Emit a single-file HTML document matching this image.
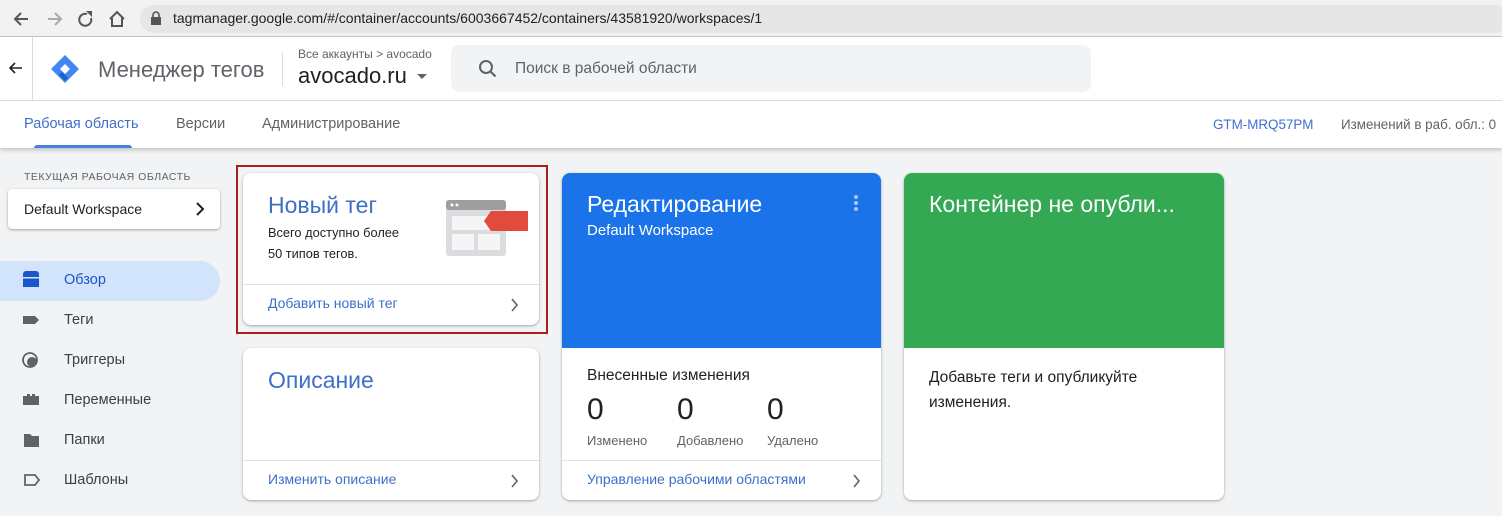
<!DOCTYPE html>
<html><head><meta charset="utf-8"><style>
*{box-sizing:border-box;margin:0;padding:0}
body{width:1502px;height:516px;overflow:hidden;background:#f1f3f4;font-family:"Liberation Sans",sans-serif;color:#202124;position:relative}
.a{position:absolute}
.card{position:absolute;background:#fff;border-radius:8px;box-shadow:0 1px 2px rgba(60,64,67,.3),0 1px 3px rgba(60,64,67,.15);overflow:hidden}
.nav{position:absolute;left:64px;font-size:14.5px;color:#3c4043}
</style></head><body>
<div class="a" style="left:0;top:0;width:1502px;height:37px;background:#f2f2f2;border-bottom:1px solid #c8c8c8"></div>
<svg class="a" style="left:12px;top:9px" width="120" height="20" viewBox="0 0 120 20">
<path d="M16 10H4M9 4L3 10l6 6" stroke="#555" stroke-width="2" fill="none"/>
<path d="M36 10h12M43 4l6 6-6 6" stroke="#aaa" stroke-width="2" fill="none"/>
<path d="M75 5a6 6 0 1 0 4 4" stroke="#555" stroke-width="2" fill="none"/><path d="M74 2h6v6z" fill="#555"/>
<path d="M98 10l7-7 7 7M100 9v8h10V9" stroke="#555" stroke-width="2" fill="none"/>
</svg>
<div class="a" style="left:140px;top:5px;width:1370px;height:28px;background:#e6e6e6;border-radius:14px"></div>
<svg class="a" style="left:150px;top:11px" width="12" height="14"><rect x="1" y="6" width="10" height="8" fill="#555"/><path d="M3 6V4a3 3 0 0 1 6 0v2" stroke="#555" stroke-width="1.6" fill="none"/></svg>
<div class="a" style="left:173px;top:10px;font-size:14px;color:#202124">tagmanager.google.com/#/container/accounts/6003667452/containers/43581920/workspaces/1</div>
<div class="a" style="left:0;top:37px;width:1502px;height:111px;background:#fff;box-shadow:0 2px 4px rgba(0,0,0,.2)"></div>
<div class="a" style="left:0;top:100px;width:1502px;height:1px;background:#dadce0"></div>
<div class="a" style="left:32px;top:37px;width:1px;height:63px;background:#dadce0"></div>
<svg class="a" style="left:9px;top:62px" width="14" height="12"><path d="M13 6H2M6 1L1 6l5 5" stroke="#202124" stroke-width="1.6" fill="none"/></svg>
<svg class="a" style="left:49px;top:53px" width="32" height="32" viewBox="0 0 32 32">
<path d="M16 2L30 16 16 30 2 16z" fill="#4285f4"/><path d="M16 11l5 5-5 5-5-5z" fill="#fff"/><path d="M10 22l6 6 3-3-6-6z" fill="#1a5fd0"/></svg>
<div class="a" style="left:98px;top:57px;font-size:22px;color:#5f6368">Менеджер тегов</div>
<div class="a" style="left:282px;top:52px;width:1px;height:34px;background:#dadce0"></div>
<div class="a" style="left:298px;top:47px;font-size:12px;color:#5f6368">Все аккаунты &gt; avocado</div>
<div class="a" style="left:298px;top:63px;font-size:22px;color:#202124">avocado.ru</div>
<svg class="a" style="left:417px;top:74px" width="12" height="6"><path d="M0 0h10L5 5z" fill="#5f6368"/></svg>
<div class="a" style="left:451px;top:45px;width:640px;height:47px;background:#f1f3f4;border-radius:8px"></div>
<svg class="a" style="left:478px;top:59px" width="20" height="20"><circle cx="8" cy="8" r="6" stroke="#5f6368" stroke-width="2" fill="none"/><path d="M12.5 12.5l5 5" stroke="#5f6368" stroke-width="2.2"/></svg>
<div class="a" style="left:515px;top:60px;font-size:15.5px;color:#5f6368">Поиск в рабочей области</div>
<div class="a" style="left:24px;top:116px;font-size:14.5px;color:#3f6fcf">Рабочая область</div>
<div class="a" style="left:34px;top:145px;width:98px;height:3px;background:#4a7fde;border-radius:3px 3px 0 0"></div>
<div class="a" style="left:176px;top:116px;font-size:14.5px;color:#5f6368">Версии</div>
<div class="a" style="left:262px;top:116px;font-size:14.5px;color:#5f6368">Администрирование</div>
<div class="a" style="left:1213px;top:117px;font-size:13.4px;color:#3f6fcf">GTM-MRQ57PM</div>
<div class="a" style="left:1341px;top:117px;font-size:13.4px;color:#5f6368">Изменений в раб. обл.: 0</div>
<div class="a" style="left:24px;top:171px;font-size:10.5px;color:#5f6368;letter-spacing:.5px">ТЕКУЩАЯ РАБОЧАЯ ОБЛАСТЬ</div>
<div class="card" style="left:8px;top:189px;width:212px;height:40px;border-radius:4px"></div>
<div class="a" style="left:24px;top:201px;font-size:14px">Default Workspace</div>
<svg class="a" style="left:195px;top:202px" width="10" height="14"><path d="M2 1l6 6-6 6" stroke="#202124" stroke-width="2" fill="none"/></svg>
<div class="a" style="left:0;top:261px;width:220px;height:40px;background:#d2e3fc;border-radius:0 20px 20px 0"></div>
<svg class="a" style="left:22px;top:270px" width="20" height="220">
<path d="M1 4a3 3 0 0 1 3-3h10a3 3 0 0 1 3 3v13H1z" fill="#1a57c8"/><rect x="1" y="7" width="16" height="1.5" fill="#d2e3fc"/>
<path d="M1 46h12l4 4-4 4H1z" fill="#5f6368"/>
<circle cx="8" cy="90" r="7" stroke="#5f6368" stroke-width="1.8" fill="none"/><circle cx="10" cy="92" r="5" fill="#5f6368"/>
<path d="M1 126h4v-2h3v2h2v-2h3v2h4v9H1z" fill="#5f6368"/>
<path d="M2 164h6l2 2h7v11H2z" fill="#5f6368"/>
<path d="M3 205h10l4 5-4 5H3z" stroke="#5f6368" stroke-width="1.8" fill="none"/>
</svg>
<div class="nav" style="top:272px;color:#1a57c8">Обзор</div>
<div class="nav" style="top:312px">Теги</div>
<div class="nav" style="top:352px">Триггеры</div>
<div class="nav" style="top:392px">Переменные</div>
<div class="nav" style="top:432px">Папки</div>
<div class="nav" style="top:472px">Шаблоны</div>
<div class="a" style="left:236px;top:165px;width:312px;height:169px;border:2px solid #b01c1c"></div>
<div class="card" style="left:243px;top:173px;width:296px;height:152px"></div>
<div class="a" style="left:268px;top:192px;font-size:23px;color:#3d6fca">Новый тег</div>
<div class="a" style="left:268px;top:222px;font-size:12.8px;line-height:21px">Всего доступно более<br>50 типов тегов.</div>
<svg class="a" style="left:446px;top:200px" width="82" height="58">
<rect x="0" y="0" width="60" height="56" rx="3" fill="#dadce0"/><rect x="0" y="0" width="60" height="10" rx="3" fill="#9e9e9e"/>
<circle cx="6" cy="5" r="1.5" fill="#fff"/><circle cx="11" cy="5" r="1.5" fill="#fff"/>
<rect x="6" y="16" width="48" height="14" fill="#f5f5f5"/><rect x="6" y="34" width="22" height="16" fill="#f5f5f5"/><rect x="32" y="34" width="22" height="16" fill="#f5f5f5"/>
<path d="M45 11h37v20H45l-7-10z" fill="#e04b3e"/></svg>
<div class="a" style="left:243px;top:284px;width:296px;height:1px;background:#e0e0e0"></div>
<div class="a" style="left:268px;top:295px;font-size:14px;color:#3d6fca">Добавить новый тег</div>
<svg class="a" style="left:510px;top:298px" width="10" height="14"><path d="M2 1l5 6-5 6" stroke="#5f6368" stroke-width="1.6" fill="none"/></svg>
<div class="card" style="left:243px;top:348px;width:296px;height:152px"></div>
<div class="a" style="left:268px;top:367px;font-size:23px;color:#3d6fca">Описание</div>
<div class="a" style="left:243px;top:460px;width:296px;height:1px;background:#e0e0e0"></div>
<div class="a" style="left:268px;top:471px;font-size:14px;color:#3d6fca">Изменить описание</div>
<svg class="a" style="left:510px;top:474px" width="10" height="14"><path d="M2 1l5 6-5 6" stroke="#5f6368" stroke-width="1.6" fill="none"/></svg>
<div class="card" style="left:562px;top:173px;width:319px;height:327px"><div style="height:175px;background:#1a73e8"></div></div>
<div class="a" style="left:587px;top:191px;font-size:23px;color:#fff">Редактирование</div>
<div class="a" style="left:587px;top:222px;font-size:15px;color:#fff">Default Workspace</div>
<svg class="a" style="left:853px;top:194px" width="6" height="20"><circle cx="3" cy="3" r="2" fill="#aac8f6"/><circle cx="3" cy="9" r="2" fill="#aac8f6"/><circle cx="3" cy="15" r="2" fill="#aac8f6"/></svg>
<div class="a" style="left:587px;top:367px;font-size:15.5px">Внесенные изменения</div>
<div class="a" style="left:587px;top:393px;font-size:30px">0</div>
<div class="a" style="left:677px;top:393px;font-size:30px">0</div>
<div class="a" style="left:767px;top:393px;font-size:30px">0</div>
<div class="a" style="left:587px;top:433px;font-size:13px;color:#5f6368">Изменено</div>
<div class="a" style="left:677px;top:433px;font-size:13px;color:#5f6368">Добавлено</div>
<div class="a" style="left:767px;top:433px;font-size:13px;color:#5f6368">Удалено</div>
<div class="a" style="left:562px;top:460px;width:319px;height:1px;background:#e0e0e0"></div>
<div class="a" style="left:587px;top:471px;font-size:14px;color:#3d6fca">Управление рабочими областями</div>
<svg class="a" style="left:852px;top:474px" width="10" height="14"><path d="M2 1l5 6-5 6" stroke="#5f6368" stroke-width="1.6" fill="none"/></svg>
<div class="card" style="left:904px;top:173px;width:320px;height:327px"><div style="height:175px;background:#34a853"></div></div>
<div class="a" style="left:929px;top:191px;font-size:23px;color:#fff">Контейнер не опубли...</div>
<div class="a" style="left:929px;top:365px;font-size:15.5px;line-height:25px">Добавьте теги и опубликуйте<br>изменения.</div>
</body></html>
